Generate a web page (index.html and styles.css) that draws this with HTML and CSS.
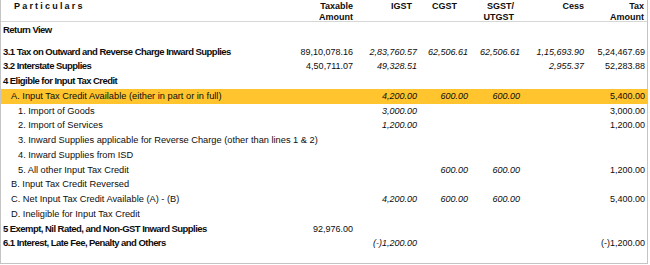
FILE: index.html
```html
<!DOCTYPE html>
<html>
<head>
<meta charset="utf-8">
<link rel="stylesheet" href="styles.css">
</head>
<body>
<div class="panel">
  <div class="row head">
    <div class="part"><span class="spaced">Particulars</span></div>
    <div class="num h-taxable">Taxable<br>Amount</div>
    <div class="num h-igst">IGST</div>
    <div class="num h-cgst">CGST</div>
    <div class="num h-sgst">SGST/<br>UTGST</div>
    <div class="num h-cess">Cess</div>
    <div class="num h-tax">Tax<br>Amount</div>
  </div>

  <div class="row first"><div class="part bold">Return View</div></div>
  <div class="spacer"></div>

  <div class="row">
    <div class="part bold">3.1 Tax on Outward and Reverse Charge Inward Supplies</div>
    <div class="num">89,10,078.16</div>
    <div class="num it">2,83,760.57</div>
    <div class="num it">62,506.61</div>
    <div class="num it">62,506.61</div>
    <div class="num it">1,15,693.90</div>
    <div class="num">5,24,467.69</div>
  </div>
  <div class="row">
    <div class="part bold">3.2 Interstate Supplies</div>
    <div class="num">4,50,711.07</div>
    <div class="num it">49,328.51</div>
    <div class="num it"></div>
    <div class="num it"></div>
    <div class="num it">2,955.37</div>
    <div class="num">52,283.88</div>
  </div>
  <div class="row"><div class="part bold">4 Eligible for Input Tax Credit</div></div>
  <div class="row hl">
    <div class="part l1">A. Input Tax Credit Available (either in part or in full)</div>
    <div class="num"></div>
    <div class="num it">4,200.00</div>
    <div class="num it">600.00</div>
    <div class="num it">600.00</div>
    <div class="num it"></div>
    <div class="num">5,400.00</div>
  </div>
  <div class="row">
    <div class="part l2">1. Import of Goods</div>
    <div class="num"></div>
    <div class="num it">3,000.00</div>
    <div class="num it"></div>
    <div class="num it"></div>
    <div class="num it"></div>
    <div class="num">3,000.00</div>
  </div>
  <div class="row">
    <div class="part l2">2. Import of Services</div>
    <div class="num"></div>
    <div class="num it">1,200.00</div>
    <div class="num it"></div>
    <div class="num it"></div>
    <div class="num it"></div>
    <div class="num">1,200.00</div>
  </div>
  <div class="row"><div class="part l2">3. Inward Supplies applicable for Reverse Charge (other than lines 1 &amp; 2)</div></div>
  <div class="row"><div class="part l2">4. Inward Supplies from ISD</div></div>
  <div class="row">
    <div class="part l2">5. All other Input Tax Credit</div>
    <div class="num"></div>
    <div class="num it"></div>
    <div class="num it">600.00</div>
    <div class="num it">600.00</div>
    <div class="num it"></div>
    <div class="num">1,200.00</div>
  </div>
  <div class="row"><div class="part l1">B. Input Tax Credit Reversed</div></div>
  <div class="row">
    <div class="part l1">C. Net Input Tax Credit Available (A) - (B)</div>
    <div class="num"></div>
    <div class="num it">4,200.00</div>
    <div class="num it">600.00</div>
    <div class="num it">600.00</div>
    <div class="num it"></div>
    <div class="num">5,400.00</div>
  </div>
  <div class="row"><div class="part l1">D. Ineligible for Input Tax Credit</div></div>
  <div class="row">
    <div class="part bold">5 Exempt, Nil Rated, and Non-GST Inward Supplies</div>
    <div class="num">92,976.00</div>
  </div>
  <div class="row">
    <div class="part bold">6.1 Interest, Late Fee, Penalty and Others</div>
    <div class="num"></div>
    <div class="num it">(-)1,200.00</div>
    <div class="num it"></div>
    <div class="num it"></div>
    <div class="num it"></div>
    <div class="num">(-)1,200.00</div>
  </div>
</div>
</body>
</html>
```

FILE: styles.css
```css
html, body {
  margin: 0;
  padding: 0;
  background: #ffffff;
}

body {
  font-family: "Liberation Sans", Arial, sans-serif;
  font-size: 9.25px;
  color: #0d0d0d;
}

.panel {
  box-sizing: border-box;
  width: 648px;
  height: 264px;
  border-left: 1px solid #c4c4c4;
  border-right: 1px solid #c4c4c4;
  border-bottom: 1px solid #c4c4c4;
  overflow: hidden;
}

.row {
  display: grid;
  grid-template-columns: 289px 63px 64px 51px 52px 64px 61px;
  height: 14.75px;
  line-height: 14.75px;
  align-items: center;
}

.row.head {
  height: 22px;
  line-height: 11px;
  align-items: start;
  padding-top: 1px;
  box-sizing: border-box;
  border-bottom: 1px solid #d6d6d6;
  font-weight: bold;
  font-size: 9px;
}

.row.first {
  height: 16px;
  line-height: 16px;
}

.spacer {
  height: 6.6px;
}

.part {
  padding-left: 2px;
  white-space: nowrap;
}

.spaced {
  letter-spacing: 2.2px;
  padding-left: 11px;
}

.l1 { padding-left: 10px; }
.l2 { padding-left: 17px; }

.num {
  text-align: right;
  white-space: nowrap;
  font-size: 9px;
}

.it { font-style: italic; }

.bold {
  font-weight: bold;
  font-size: 9.5px;
  letter-spacing: -0.55px;
}

.hl { background: #ffc42e; }

.h-taxable { padding-right: 0; }
.h-igst { padding-right: 5px; }
.h-cgst { padding-right: 11px; }
.h-sgst { padding-right: 6px; }
.h-cess { padding-right: 0; }
.h-tax { padding-right: 1px; }
```
